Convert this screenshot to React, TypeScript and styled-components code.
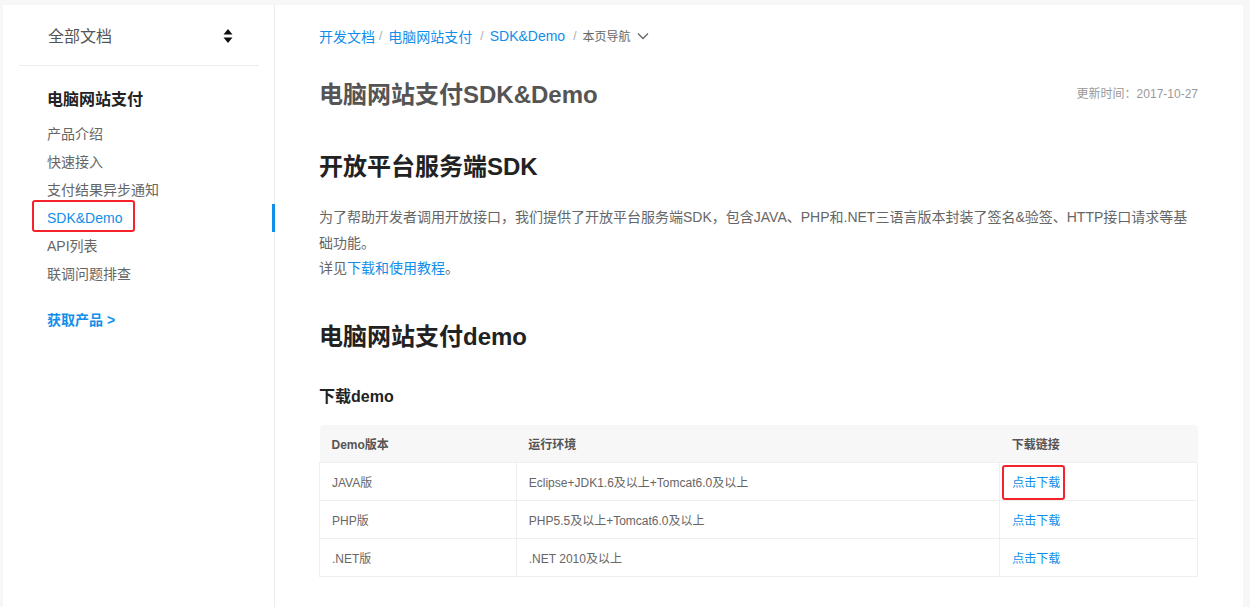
import React from "react";
import styled, { createGlobalStyle } from "styled-components";

const Global = createGlobalStyle`
  html, body { margin: 0; padding: 0; background: #f7f7f7; }
  body { font-family: "Liberation Sans", "Noto Sans CJK SC", sans-serif; color: #666; }
  * { box-sizing: border-box; }
`;

const BLUE = "#108ee9";

const Page = styled.div`
  margin: 5px 7px 0 3px;
  background: #fff;
  display: flex;
  min-height: 602px;
`;

const Sidebar = styled.aside`
  width: 272px;
  flex-shrink: 0;
  border-right: 1px solid #ececec;
  display: flex;
  flex-direction: column;
`;

const SideHeader = styled.div`
  height: 61px;
  margin: 0 15px 0 16px;
  padding: 0 26px 0 29px;
  border-bottom: 1px solid #ececec;
  display: flex;
  align-items: center;
  justify-content: space-between;
  font-size: 16px;
  color: #555;
`;

const SortIcon = styled.svg`
  width: 10px;
  height: 14px;
  margin-top: 2px;
`;

const SideTitle = styled.div`
  margin-top: 20px;
  padding-left: 44px;
  font-size: 16px;
  font-weight: bold;
  color: #222;
  line-height: 28px;
`;

const NavList = styled.ul`
  list-style: none;
  margin: 6px 0 0;
  padding: 0;
`;

const NavItem = styled.li<{ $active?: boolean }>`
  position: relative;
  height: 28px;
  line-height: 28px;
  padding-left: 44px;
  font-size: 14px;
  color: ${(p) => (p.$active ? BLUE : "#666")};
  ${(p) =>
    p.$active &&
    `&::after { content: ""; position: absolute; right: -1px; top: 0; width: 3px; height: 28px; background: ${BLUE}; }`}
`;

const Marker = styled.span<{ $l: number; $r: number; $t: number; $b: number }>`
  position: absolute;
  left: ${(p) => p.$l}px;
  right: ${(p) => p.$r}px;
  top: ${(p) => p.$t}px;
  bottom: ${(p) => p.$b}px;
  border: 2.5px solid #f5222d;
  border-radius: 3px;
  pointer-events: none;
`;

const Anchor = styled.span`
  position: relative;
  display: inline-block;
`;

const GetProduct = styled.div`
  margin-top: 18px;
  padding-left: 44px;
  font-size: 14px;
  font-weight: bold;
  color: ${BLUE};
  line-height: 28px;
`;

const Main = styled.main`
  flex: 1;
  padding: 0 45px 0 44px;
`;

const Crumbs = styled.nav`
  height: 61px;
  display: flex;
  align-items: center;
  font-size: 14px;
`;

const Crumb = styled.a`
  color: ${BLUE};
  text-decoration: none;
`;

const Sep = styled.span<{ $tight?: boolean }>`
  color: #aaa;
  margin: 0 6px 0 ${(p) => (p.$tight ? 4 : 8)}px;
  font-size: 12px;
`;

const PageNav = styled.span`
  display: inline-flex;
  align-items: center;
  gap: 6px;
  color: #666;
  font-size: 12px;
`;

const TitleRow = styled.div`
  display: flex;
  align-items: center;
  justify-content: space-between;
  height: 36px;
  margin-top: 8px;
`;

const PageTitle = styled.h1`
  margin: 0;
  font-size: 24px;
  font-weight: bold;
  color: #555;
`;

const Updated = styled.span`
  font-size: 12px;
  color: #999;
`;

const H2 = styled.h2<{ $mt: number }>`
  margin: ${(p) => p.$mt}px 0 0;
  font-size: 24px;
  font-weight: bold;
  color: #222;
  line-height: 36px;
`;

const Para = styled.p`
  margin: 20px 0 0;
  font-size: 14px;
  line-height: 25.5px;
  color: #666;
`;

const Link = styled.a`
  color: ${BLUE};
  text-decoration: none;
`;

const H3 = styled.h3`
  margin: 30px 0 0;
  font-size: 16px;
  font-weight: bold;
  color: #222;
  line-height: 24px;
`;

const Table = styled.table`
  margin-top: 16px;
  width: 100%;
  border-collapse: collapse;
  font-size: 12px;
  color: #666;
`;

const Th = styled.th<{ $w: number }>`
  width: ${(p) => p.$w}px;
  height: 38px;
  background: #f7f7f7;
  text-align: left;
  font-weight: bold;
  color: #555;
  padding: 0 12px;
  &:first-child { border-top-left-radius: 4px; }
  &:last-child { border-top-right-radius: 4px; }
`;

const Td = styled.td`
  height: 38px;
  padding: 0 12px;
  border: 1px solid #efefef;
  position: relative;
`;

const rows = [
  ["JAVA版", "Eclipse+JDK1.6及以上+Tomcat6.0及以上", true],
  ["PHP版", "PHP5.5及以上+Tomcat6.0及以上", false],
  [".NET版", ".NET 2010及以上", false],
] as const;

const navItems = ["产品介绍", "快速接入", "支付结果异步通知", "SDK&Demo", "API列表", "联调问题排查"];

export default function App() {
  return (
    <>
      <Global />
      <Page>
        <Sidebar>
          <SideHeader>
            <span>全部文档</span>
            <SortIcon viewBox="0 0 10 14">
              <path d="M5 0 L9.5 5.5 H0.5 Z M5 14 L9.5 8.5 H0.5 Z" fill="#111" />
            </SortIcon>
          </SideHeader>
          <SideTitle>电脑网站支付</SideTitle>
          <NavList>
            {navItems.map((t) => (
              <NavItem key={t} $active={t === "SDK&Demo"}>
                {t === "SDK&Demo" ? (
                  <Anchor>
                    {t}
                    <Marker $l={-15} $r={-13} $t={-4} $b={0} />
                  </Anchor>
                ) : (
                  t
                )}
              </NavItem>
            ))}
          </NavList>
          <GetProduct>获取产品 &gt;</GetProduct>
        </Sidebar>
        <Main>
          <Crumbs>
            <Crumb>开发文档</Crumb>
            <Sep $tight>/</Sep>
            <Crumb>电脑网站支付</Crumb>
            <Sep>/</Sep>
            <Crumb>SDK&amp;Demo</Crumb>
            <Sep>/</Sep>
            <PageNav>
              本页导航
              <svg width="12" height="8" viewBox="0 0 12 8">
                <path d="M1 1.5 L6 6.5 L11 1.5" fill="none" stroke="#666" strokeWidth="1.3" />
              </svg>
            </PageNav>
          </Crumbs>
          <TitleRow>
            <PageTitle>电脑网站支付SDK&amp;Demo</PageTitle>
            <Updated>更新时间：2017-10-27</Updated>
          </TitleRow>
          <H2 $mt={39}>开放平台服务端SDK</H2>
          <Para>
            为了帮助开发者调用开放接口，我们提供了开放平台服务端SDK，包含JAVA、PHP和.NET三语言版本封装了签名&amp;验签、HTTP接口请求等基础功能。
            <br />
            详见<Link>下载和使用教程</Link>。
          </Para>
          <H2 $mt={37}>电脑网站支付demo</H2>
          <H3>下载demo</H3>
          <Table>
            <thead>
              <tr>
                <Th $w={197}>Demo版本</Th>
                <Th $w={484}>运行环境</Th>
                <Th $w={198}>下载链接</Th>
              </tr>
            </thead>
            <tbody>
              {rows.map(([v, env, marked]) => (
                <tr key={v}>
                  <Td>{v}</Td>
                  <Td>{env}</Td>
                  <Td>
                    <Link>点击下载</Link>
                    {marked && <Marker $l={2} $r={132} $t={2} $b={0} />}
                  </Td>
                </tr>
              ))}
            </tbody>
          </Table>
        </Main>
      </Page>
    </>
  );
}
